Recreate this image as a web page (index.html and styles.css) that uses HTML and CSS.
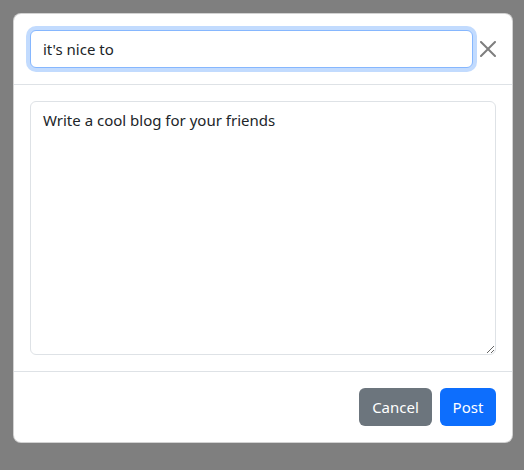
FILE: index.html
```html
<!DOCTYPE html>
<html lang="en">
<head>
<meta charset="utf-8">
<title>New post</title>
<link rel="stylesheet" href="styles.css">
</head>
<body>
<div class="backdrop">
  <div class="modal">
    <div class="modal-header">
      <input class="form-control title-input" type="text" value="it's nice to">
      <button class="btn-close" type="button" aria-label="Close">
        <svg viewBox="0 0 16 16" width="16" height="16"><path d="M.293.293a1 1 0 0 1 1.414 0L8 6.586 14.293.293a1 1 0 1 1 1.414 1.414L9.414 8l6.293 6.293a1 1 0 0 1-1.414 1.414L8 9.414l-6.293 6.293a1 1 0 0 1-1.414-1.414L6.586 8 .293 1.707a1 1 0 0 1 0-1.414z"/></svg>
      </button>
    </div>
    <div class="modal-body">
      <textarea class="form-control body-input">Write a cool blog for your friends</textarea>
    </div>
    <div class="modal-footer">
      <button class="btn btn-secondary btn-cancel" type="button">Cancel</button>
      <button class="btn btn-primary btn-post" type="button">Post</button>
    </div>
  </div>
</div>
</body>
</html>
```
FILE: styles.css
```css
* { box-sizing: border-box; }
html, body { margin: 0; height: 100%; }
body {
  font-family: "Noto Sans", "Open Sans", sans-serif;
  font-size: 15px;
  color: #212529;
}
.backdrop {
  min-height: 100%;
  background: #7f7f7f;
  padding: 13px 0 0 13px;
}
.modal {
  width: 500px;
  background: #fff;
  border: 1px solid rgba(0,0,0,.175);
  border-radius: 8px;
}
.modal-header {
  display: flex;
  align-items: center;
  padding: 16px 15px 16px 16px;
  border-bottom: 1px solid #dee2e6;
  gap: 6px;
}
.form-control {
  font: inherit;
  color: #212529;
  border: 1px solid #dee2e6;
  border-radius: 6px;
  padding: 6px 12px;
  line-height: 24px;
  background: #fff;
  outline: none;
}
.title-input {
  width: 444px;
  height: 38px;
  border-color: #86b7fe;
  box-shadow: 0 0 0 4px rgba(13,110,253,.25);
}
.btn-close {
  width: 18px;
  height: 18px;
  padding: 1px;
  border: 0;
  background: transparent;
  opacity: .5;
  display: flex;
}
.btn-close svg { width: 16px; height: 16px; fill: #000; }
.modal-body {
  padding: 16px;
  border-bottom: 1px solid #dee2e6;
}
.body-input {
  display: block;
  width: 100%;
  height: 254px;
  resize: vertical;
}
.modal-footer {
  display: flex;
  justify-content: flex-end;
  gap: 8px;
  padding: 16px 16px 16px 16px;
}
.btn {
  font: inherit;
  height: 38px;
  border: 0;
  border-radius: 6px;
  color: #fff;
  padding: 0;
  text-align: center;
}
.btn-secondary { background: #6c757d; }
.btn-primary { background: #0d6efd; }
.btn-cancel { width: 73px; }
.btn-post { width: 56px; }
```
